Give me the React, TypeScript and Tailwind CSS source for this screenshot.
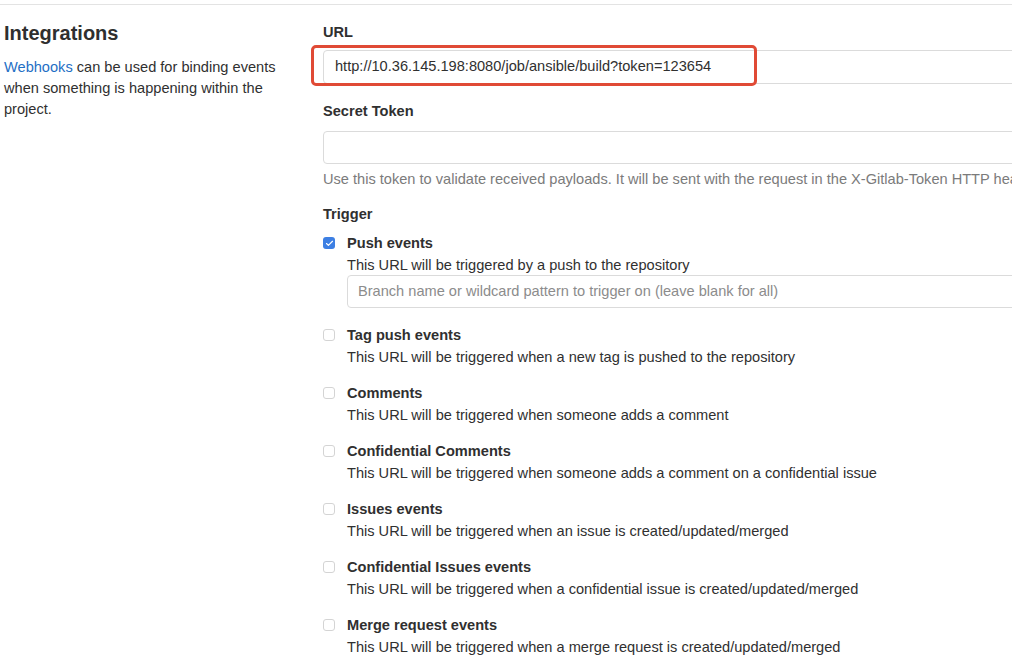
import { Check } from "lucide-react";

const triggers = [
  { title: "Push events", desc: "This URL will be triggered by a push to the repository", checked: true, branch: true },
  { title: "Tag push events", desc: "This URL will be triggered when a new tag is pushed to the repository" },
  { title: "Comments", desc: "This URL will be triggered when someone adds a comment" },
  { title: "Confidential Comments", desc: "This URL will be triggered when someone adds a comment on a confidential issue" },
  { title: "Issues events", desc: "This URL will be triggered when an issue is created/updated/merged" },
  { title: "Confidential Issues events", desc: "This URL will be triggered when a confidential issue is created/updated/merged" },
  { title: "Merge request events", desc: "This URL will be triggered when a merge request is created/updated/merged" },
];

function Box({ checked }: { checked?: boolean }) {
  if (checked) {
    return (
      <span className="mt-[5px] flex h-3 w-3 shrink-0 items-center justify-center rounded-[3px] bg-[#3d7fe3]">
        <Check size={9} strokeWidth={3} className="text-white" />
      </span>
    );
  }
  return <span className="mt-[5px] h-3 w-3 shrink-0 rounded-[3px] border border-[#d4d4d4] bg-white" />;
}

export default function App() {
  return (
    <div
      className="h-[658px] w-[1012px] overflow-hidden bg-white pt-1 text-[14.6px] text-[#303030]"
      style={{ fontFamily: '"Liberation Sans", Arial, sans-serif' }}
    >
      <div className="flex border-t border-[#e3e3e3] pl-1">
        <div className="w-[319px] shrink-0 pt-[14px]">
          <h2 className="text-[20px] leading-[28px] font-bold text-[#2f2f2f]">Integrations</h2>
          <p className="mt-[10px] w-[292px] leading-[21px]">
            <a className="text-[#1f6fc5]">Webhooks</a> can be used for binding events when something is happening
            within the project.
          </p>
        </div>

        <div className="w-[760px] shrink-0 pt-[17px]">
          <label className="block leading-5 font-bold">URL</label>
          <div className="relative mt-2">
            <div className="flex h-[34px] items-center rounded border border-[#dbdbdb] pl-[11px] text-[#303030]">
              http://10.36.145.198:8080/job/ansible/build?token=123654
            </div>
            <div className="pointer-events-none absolute top-[-5px] left-[-12px] h-[41px] w-[446px] rounded-[5px] border-[3px] border-[#e04a35]" />
          </div>

          <label className="mt-[17px] block leading-5 font-bold">Secret Token</label>
          <div className="mt-[10px] h-[33px] rounded border border-[#dbdbdb]" />
          <p className="mt-[5px] leading-5 whitespace-nowrap text-[#7b7b7b]">
            Use this token to validate received payloads. It will be sent with the request in the X-Gitlab-Token HTTP header.
          </p>

          <label className="mt-[15px] block leading-5 font-bold">Trigger</label>
          <div className="mt-2 flex flex-col gap-[14px]">
            {triggers.map((t) => (
              <div key={t.title} className="flex gap-3">
                <Box checked={t.checked} />
                <div className="flex-1">
                  <div className="leading-[22px] font-bold">{t.title}</div>
                  <div className="leading-[22px]">{t.desc}</div>
                  {t.branch && (
                    <div className="mt-[-1px] mb-[2px] flex h-[33px] items-center rounded border border-[#dbdbdb] pl-[10px] text-[#8c8c8c]">
                      Branch name or wildcard pattern to trigger on (leave blank for all)
                    </div>
                  )}
                </div>
              </div>
            ))}
          </div>
        </div>
      </div>
    </div>
  );
}
